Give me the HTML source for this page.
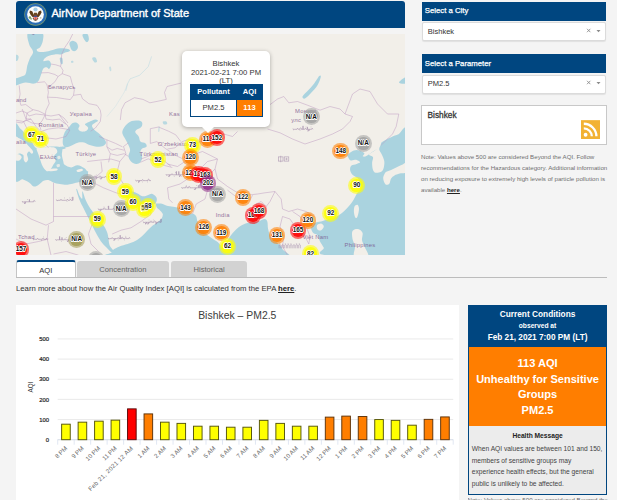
<!DOCTYPE html>
<html><head><meta charset="utf-8">
<style>
html,body{margin:0;padding:0;}
html{width:617px;height:500px;overflow:hidden;background:#f4f4f4;}
body{width:617px;height:500px;overflow:hidden;background:#f4f4f4;font-family:"Liberation Sans",sans-serif;position:relative;color:#222;}
.abs{position:absolute;}
#hdr{left:16px;top:1px;width:389px;height:27px;background:#004680;border-radius:3px 3px 0 0;}
#hdr .t{position:absolute;left:35.5px;top:5.9px;font-size:11.05px;line-height:12px;font-weight:normal;-webkit-text-stroke:0.38px #fff;color:#fff;white-space:nowrap;}
#map{left:16px;top:34px;width:389px;height:220.5px;background:#f2efe9;overflow:hidden;}
#map svg{position:absolute;left:0;top:0;}
.ph{background:#004680;color:#fff;font-size:7.75px;font-weight:normal;-webkit-text-stroke:0.25px #fff;line-height:9px;}
.sel{background:#fff;border:1px solid #dbdbdb;border-radius:2px;box-sizing:border-box;font-size:7.5px;line-height:9px;color:#333;box-shadow:0 0.5px 1px rgba(0,0,0,0.08);}
.mk{position:absolute;width:0;height:0;}
.mk i{position:absolute;left:-8.4px;top:-8.4px;width:16.8px;height:16.8px;border-radius:50%;opacity:.56;}
.mk b{position:absolute;left:-6.4px;top:-6.4px;width:12.8px;height:12.8px;border-radius:50%;opacity:.84;}
.mk span{position:absolute;left:-12px;top:-5.1px;width:24px;text-align:center;font-size:6.35px;line-height:9px;font-weight:bold;color:#111;
 text-shadow:-0.6px 0 #fff,0.6px 0 #fff,0 -0.6px #fff,0 0.6px #fff,-0.5px -0.5px #fff,0.5px 0.5px #fff,-0.5px 0.5px #fff,0.5px -0.5px #fff;}
.ml{position:absolute;font-size:5.9px;line-height:7px;color:#744a85;white-space:nowrap;opacity:.74;letter-spacing:0.22px}
.ml.ar{letter-spacing:0;font-size:5.8px}
#pop{left:166px;top:17px;width:88px;height:75.5px;background:#fff;border-radius:5px;box-shadow:0 1px 4px rgba(0,0,0,0.3);}
#pop .tx{position:absolute;left:0;width:88px;text-align:center;font-size:7.7px;line-height:8.5px;color:#333;top:9.2px;}
#tip{left:185.5px;top:92.5px;width:0;height:0;border-left:6.5px solid transparent;border-right:6.5px solid transparent;border-top:6.5px solid #fff;}
.tab{box-sizing:border-box;font-size:7.6px;line-height:9px;text-align:center;border-radius:3px 3px 0 0;}
</style></head><body>
<div id="hdr" class="abs"><div class="t">AirNow Department of State</div>
<svg class="abs" style="left:7.7px;top:1.9px" width="23" height="23" viewBox="-11.5 -11.5 23 23">
<circle r="11.2" fill="#7d9a6c"/><circle r="10.6" fill="#2a6db5"/><circle r="8.35" fill="#fdfdfb"/>
<circle cx="0" cy="-5" r="2.1" fill="#a5cde6"/>
<path d="M-5.6 -4 L-3.3 -3.2 L-1.6 0.2 L-1 3.2 L-3 2.4 L-4.9 0.2 L-6 -2 Z" fill="#5e3d18"/>
<path d="M5.6 -4 L3.3 -3.2 L1.6 0.2 L1 3.2 L3 2.4 L4.9 0.2 L6 -2 Z" fill="#5e3d18"/>
<path d="M-1.4 -1.8 L1.4 -1.8 L1.8 1.6 L-1.8 1.6 Z" fill="#6a4a25"/>
<path d="M-3 3.4 L3 3.4 L1.6 5.8 L0 6.6 L-1.6 5.8 Z" fill="#6d5a3e"/>
<rect x="-1.7" y="1.3" width="3.4" height="3.7" rx="0.8" fill="#e0524a"/>
<rect x="-1.7" y="1.3" width="3.4" height="1.1" fill="#2c4f9c"/>
<rect x="-0.9" y="2.4" width="0.45" height="2.5" fill="#fff" opacity=".8"/><rect x="0.45" y="2.4" width="0.45" height="2.5" fill="#fff" opacity=".8"/>
<circle cx="-5.6" cy="3" r="1.2" fill="#5f8f4a" opacity=".85"/><circle cx="-4.4" cy="4.4" r="0.8" fill="#5f8f4a" opacity=".8"/>
<circle cx="5.2" cy="3.4" r="0.8" fill="#8a8a80" opacity=".6"/>
</svg>
</div>
<div id="map" class="abs">
<svg width="389" height="221" viewBox="0 0 389 221">
<path d="M12.2 -1.3C14.3 -3.1 23.5 -2.6 25.9 -1.3C28.4 -0.0 27.2 4.1 26.9 6.5C26.6 8.9 25.3 11.5 24.3 13.0C23.3 14.5 21.0 14.6 20.7 15.4C20.5 16.2 21.3 17.4 22.7 17.8C24.1 18.2 27.0 18.1 29.2 17.8C31.3 17.6 33.2 16.8 35.7 16.2C38.1 15.6 41.1 14.5 43.8 14.3C46.5 14.1 50.2 14.6 51.9 15.1C53.5 15.5 54.3 16.4 53.8 17.0C53.3 17.6 50.1 18.2 48.6 18.8C47.2 19.4 46.7 20.2 45.1 20.4C43.4 20.7 41.0 20.2 38.9 20.4C36.8 20.7 34.1 21.2 32.4 21.9C30.7 22.5 29.7 23.4 28.8 24.3C28.0 25.2 26.8 26.8 27.6 27.2C28.3 27.6 32.0 26.1 33.2 26.7C34.5 27.3 35.0 29.4 35.0 30.8C35.0 32.1 34.0 34.4 33.2 34.8C32.5 35.3 31.5 33.2 30.5 33.2C29.5 33.2 28.1 33.6 27.2 34.8C26.3 36.1 25.9 38.5 25.1 40.5C24.3 42.5 23.5 45.5 22.4 47.0C21.2 48.5 20.3 49.3 18.2 49.6C16.0 49.9 12.2 48.5 9.7 48.6C7.2 48.7 4.9 49.8 3.2 50.2C1.6 50.7 0.8 51.3 0.0 51.5C-0.8 51.8 -1.1 52.6 -1.3 51.5C-1.5 50.5 -2.2 46.8 -1.3 45.4C-0.4 43.9 2.3 43.8 4.1 42.9C5.8 42.1 8.2 42.4 9.4 40.5C10.6 38.6 10.6 34.3 11.3 31.6C12.1 28.9 13.0 26.4 13.9 24.3C14.9 22.2 16.5 20.6 16.9 19.1C17.2 17.7 16.9 17.1 16.2 15.6C15.6 14.0 13.6 12.5 13.0 9.7C12.3 6.9 10.0 0.5 12.2 -1.3Z" fill="#aad3df" />
<path d="M53.5 8.9C53.9 7.9 55.5 6.8 56.7 6.8C57.9 6.8 59.9 7.8 60.8 8.9C61.6 10.1 62.2 12.4 61.9 13.8C61.6 15.1 60.2 16.6 59.2 17.0C58.2 17.4 56.7 16.9 55.9 16.2C55.1 15.5 54.7 14.2 54.3 13.0C53.9 11.8 53.1 9.9 53.5 8.9Z" fill="#aad3df" />
<path d="M66.5 0.8C66.9 -0.3 70.2 -0.7 71.3 0.0C72.4 0.7 72.9 3.5 72.9 4.9C72.9 6.2 72.0 7.8 71.3 8.1C70.6 8.4 69.7 7.7 68.9 6.5C68.1 5.3 66.0 1.9 66.5 0.8Z" fill="#aad3df" />
<path d="M76.2 24.3C76.3 23.5 78.6 23.0 79.4 23.5C80.2 24.0 81.2 26.7 81.0 27.6C80.9 28.4 79.4 28.9 78.6 28.4C77.8 27.8 76.0 25.1 76.2 24.3Z" fill="#aad3df" opacity=".8"/>
<path d="M43.8 24.3C43.9 23.3 45.7 23.2 46.2 24.0C46.7 24.8 46.9 28.2 46.7 29.2C46.5 30.2 45.5 30.8 45.1 30.0C44.6 29.2 43.6 25.3 43.8 24.3Z" fill="#aad3df" />
<path d="M-0.8 21.1C-0.3 20.3 2.0 21.1 2.4 21.9C2.9 22.7 2.5 25.1 1.9 25.9C1.4 26.7 -0.4 27.6 -0.8 26.7C-1.3 25.9 -1.4 21.9 -0.8 21.1Z" fill="#aad3df" opacity=".8"/>
<path d="M55.1 27.2C55.4 26.9 56.7 26.7 57.1 26.9C57.4 27.1 57.6 28.2 57.4 28.5C57.1 28.8 55.8 29.1 55.4 28.8C55.1 28.6 54.8 27.6 55.1 27.2Z" fill="#aad3df" opacity=".7"/>
<path d="M93.2 33.2C93.3 32.5 94.5 32.4 94.8 32.9C95.2 33.4 95.4 35.8 95.3 36.5C95.2 37.1 94.4 37.5 94.0 37.0C93.7 36.4 93.1 33.9 93.2 33.2Z" fill="#aad3df" opacity=".6"/>
<path d="M47.0 104.1C47.3 102.1 47.7 100.2 48.6 98.4C49.6 96.7 51.3 95.1 52.7 93.6C54.0 92.0 55.4 89.8 56.7 89.0C58.1 88.2 59.6 88.3 60.8 88.7C61.9 89.1 63.3 90.5 63.5 91.6C63.8 92.7 62.0 94.2 62.4 95.2C62.7 96.2 64.3 97.3 65.6 97.6C67.0 97.9 69.4 97.5 70.5 96.8C71.6 96.1 72.4 94.6 72.1 93.6C71.9 92.5 68.7 91.3 68.9 90.3C69.0 89.4 71.2 88.7 72.9 87.9C74.7 87.1 77.9 85.6 79.4 85.4C80.9 85.3 82.4 86.1 81.8 87.1C81.3 88.0 76.9 89.8 76.2 91.1C75.5 92.5 76.7 93.8 77.8 95.2C78.9 96.5 81.0 97.7 82.7 99.2C84.3 100.7 86.3 102.5 87.5 104.1C88.7 105.6 90.0 107.2 90.0 108.5C90.0 109.7 89.0 111.0 87.5 111.7C86.0 112.4 83.3 112.8 81.0 112.7C78.7 112.6 75.9 111.8 73.7 111.1C71.6 110.4 70.0 108.9 68.1 108.5C66.2 108.0 64.3 108.0 62.4 108.5C60.5 108.9 58.8 110.2 56.7 111.1C54.7 111.9 51.9 113.4 50.2 113.3C48.6 113.2 47.5 112.1 47.0 110.6C46.5 109.0 46.7 106.1 47.0 104.1Z" fill="#aad3df" />
<path d="M43.8 113.0C44.4 112.5 47.7 112.2 48.6 112.5C49.6 112.8 50.1 114.2 49.4 114.6C48.8 115.1 45.5 115.5 44.6 115.3C43.6 115.0 43.1 113.5 43.8 113.0Z" fill="#aad3df" />
<path d="M106.4 97.3C106.8 95.6 108.2 93.0 109.8 91.3C111.4 89.6 113.7 87.8 115.8 87.0C118.0 86.2 121.0 86.3 122.7 86.6C124.4 86.9 125.7 87.6 126.2 88.7C126.6 89.8 126.2 91.9 125.3 93.0C124.4 94.2 122.0 94.7 121.0 95.6C120.0 96.4 119.0 97.0 119.3 98.2C119.6 99.3 121.9 100.9 122.7 102.5C123.6 104.0 123.3 106.5 124.4 107.6C125.6 108.8 128.6 108.5 129.6 109.4C130.6 110.2 131.0 111.9 130.5 112.8C129.9 113.7 127.2 113.7 126.2 114.5C125.2 115.4 124.4 116.5 124.4 118.0C124.4 119.4 126.2 121.4 126.2 123.1C126.2 124.8 125.5 127.1 124.4 128.3C123.4 129.4 121.7 130.2 120.1 130.0C118.6 129.9 116.3 128.7 115.0 127.4C113.7 126.1 112.5 124.1 112.4 122.3C112.3 120.4 114.1 118.1 114.1 116.2C114.1 114.4 113.1 112.8 112.4 111.1C111.7 109.4 110.7 107.5 109.8 105.9C109.0 104.3 107.8 103.0 107.2 101.6C106.7 100.2 105.9 99.0 106.4 97.3Z" fill="#aad3df" />
<path d="M146.8 87.8C147.2 87.4 149.5 87.1 150.3 87.5C151.0 87.9 151.5 89.6 151.1 90.1C150.8 90.6 148.7 90.8 148.0 90.4C147.3 90.1 146.4 88.3 146.8 87.8Z" fill="#aad3df" opacity=".8"/>
<path d="M142.5 93.0C142.8 92.2 143.6 91.9 143.7 92.7C143.9 93.4 143.6 96.5 143.4 97.3C143.1 98.1 142.3 98.4 142.2 97.7C142.0 96.9 142.3 93.8 142.5 93.0Z" fill="#aad3df" opacity=".5"/>
<path d="M-1.3 92.7C-0.3 84.6 2.6 93.5 4.5 94.8C6.4 96.2 8.1 98.6 10.0 100.8C12.0 103.1 14.4 106.3 16.2 108.5C18.0 110.7 18.0 113.3 20.7 114.0C23.4 114.7 28.8 112.9 32.4 112.7C36.0 112.5 40.2 112.4 42.5 112.7C44.8 113.0 45.6 113.2 46.2 114.6C46.8 116.0 45.7 118.9 45.9 121.1C46.1 123.3 46.9 126.0 47.3 127.6C47.8 129.2 47.3 129.9 48.6 130.8C49.9 131.8 52.9 133.4 55.1 133.4C57.3 133.5 59.4 131.0 61.6 131.2C63.7 131.3 66.5 133.0 68.1 134.1C69.7 135.1 70.6 136.8 71.3 137.3C72.0 137.8 72.1 135.8 72.1 137.1C72.1 138.4 72.0 143.4 71.3 145.2C70.6 146.9 69.7 147.1 68.1 147.6C66.5 148.1 63.7 148.0 61.6 148.4C59.4 148.8 57.0 149.6 55.1 150.0C53.2 150.4 52.1 150.8 50.2 150.8C48.4 150.8 45.9 150.4 43.8 150.0C41.6 149.6 39.2 149.1 37.3 148.4C35.4 147.7 34.0 146.3 32.4 146.0C30.8 145.7 29.2 146.0 27.6 146.8C25.9 147.6 24.3 149.9 22.7 150.8C21.1 151.8 19.4 152.9 17.8 152.5C16.2 152.1 14.9 149.6 13.0 148.4C11.1 147.2 8.9 145.9 6.5 145.2C4.1 144.4 -0.0 152.6 -1.3 143.9C-2.6 135.1 -2.3 100.9 -1.3 92.7Z" fill="#aad3df" />
<path d="M-1.3 103.6C-0.5 100.8 1.7 103.6 3.2 104.2C4.8 104.9 6.3 106.0 8.1 107.5C9.9 109.0 12.3 111.7 13.8 113.3C15.3 115.0 16.7 116.5 17.0 117.5C17.4 118.6 16.6 119.8 15.9 119.8C15.2 119.8 13.8 117.5 13.0 117.5C12.2 117.6 11.2 119.0 11.0 120.3C10.9 121.6 12.3 123.8 12.2 125.2C12.0 126.5 10.8 128.3 10.0 128.4C9.3 128.5 8.2 127.2 7.8 126.0C7.3 124.8 8.0 122.2 7.3 121.1C6.5 120.0 4.7 119.5 3.2 119.5C1.8 119.5 -0.5 123.8 -1.3 121.1C-2.1 118.5 -2.1 106.4 -1.3 103.6Z" fill="#f2efe9" />
<path d="M-1.3 120.9C-0.5 120.0 2.1 120.1 3.2 120.5C4.4 120.9 5.7 122.3 5.7 123.3C5.7 124.3 4.4 126.1 3.2 126.5C2.1 126.9 -0.5 126.7 -1.3 125.7C-2.1 124.8 -2.1 121.7 -1.3 120.9Z" fill="#f2efe9" />
<path d="M20.7 114.0C21.5 112.8 24.8 113.5 26.7 113.3C28.7 113.2 30.4 112.9 32.4 113.0C34.4 113.1 37.4 113.0 38.9 113.8C40.4 114.6 41.5 116.5 41.3 117.9C41.2 119.2 38.4 120.4 38.1 121.9C37.8 123.4 39.8 125.3 39.7 126.8C39.6 128.3 38.1 129.5 37.3 130.8C36.5 132.2 35.8 133.8 34.8 134.9C33.9 136.0 32.7 137.3 31.6 137.3C30.5 137.3 29.3 136.0 28.4 134.9C27.4 133.8 26.6 132.3 25.9 130.8C25.3 129.3 24.9 127.7 24.3 126.0C23.7 124.2 23.0 122.3 22.4 120.3C21.8 118.3 20.0 115.1 20.7 114.0Z" fill="#f2efe9" />
<path d="M32.4 135.1C33.7 134.7 39.1 134.3 40.5 134.5C41.9 134.7 42.1 136.0 40.8 136.4C39.5 136.9 34.1 137.3 32.7 137.1C31.3 136.9 31.1 135.6 32.4 135.1Z" fill="#f2efe9" />
<path d="M60.8 136.1C61.4 135.6 64.6 134.7 65.6 134.8C66.6 134.9 67.4 135.9 66.8 136.4C66.2 137.0 62.9 138.1 61.9 138.0C60.9 138.0 60.2 136.6 60.8 136.1Z" fill="#f2efe9" />
<path d="M41.3 122.7C41.6 122.2 43.2 121.6 43.8 121.9C44.3 122.2 44.8 123.8 44.6 124.3C44.3 124.9 42.7 125.4 42.1 125.2C41.6 124.9 41.1 123.3 41.3 122.7Z" fill="#f2efe9" opacity=".8"/>
<path d="M40.5 130.8C40.9 130.3 42.9 129.7 43.4 130.0C44.0 130.3 44.1 131.9 43.8 132.5C43.4 133.0 41.9 133.5 41.3 133.3C40.8 133.0 40.2 131.4 40.5 130.8Z" fill="#f2efe9" opacity=".8"/>
<path d="M60.4 155.9C59.9 154.1 60.6 154.5 61.2 155.5C61.7 156.4 62.8 160.2 63.6 161.8C64.5 163.3 65.8 165.3 66.2 164.7C66.6 164.1 66.1 159.3 66.2 158.2C66.3 157.1 66.4 156.9 67.0 158.2C67.6 159.6 68.6 163.6 69.8 166.3C71.0 169.0 72.3 171.4 74.3 174.4C76.3 177.4 79.3 181.2 81.6 184.1C83.9 187.1 86.5 189.8 88.1 192.2C89.7 194.7 90.6 196.6 91.3 198.7C92.1 200.9 92.1 203.0 92.5 205.2C92.9 207.4 93.0 209.9 93.8 211.7C94.5 213.5 96.7 215.1 97.0 216.2C97.3 217.4 96.8 218.9 95.7 218.5C94.6 218.1 92.3 215.5 90.5 213.6C88.7 211.7 86.6 209.6 84.8 207.2C83.1 204.7 81.3 201.5 80.0 199.1C78.6 196.6 78.0 195.0 76.7 192.6C75.5 190.1 74.2 187.4 72.7 184.5C71.2 181.5 69.3 177.7 67.8 174.7C66.3 171.8 65.0 169.8 63.8 166.6C62.5 163.5 60.8 157.8 60.4 155.9Z" fill="#aad3df" />
<path d="M104.3 156.6C105.2 156.4 107.9 158.1 110.0 158.2C112.0 158.3 114.4 157.1 116.5 157.4C118.5 157.7 120.5 159.0 122.1 159.8C123.7 160.6 124.7 162.0 126.2 162.3C127.7 162.5 129.4 161.9 131.0 161.4C132.7 161.0 134.4 159.6 135.9 159.8C137.4 160.0 139.1 161.7 140.0 162.7C140.8 163.8 141.0 165.1 140.8 166.3C140.6 167.5 139.9 169.5 138.8 169.9C137.7 170.3 135.8 168.7 134.3 168.7C132.7 168.8 130.8 169.4 129.4 170.4C128.1 171.3 127.4 174.0 126.2 174.4C125.0 174.8 123.3 173.9 122.1 172.8C120.9 171.7 120.1 169.3 118.9 167.9C117.7 166.6 116.6 165.6 114.8 164.7C113.1 163.7 110.0 163.2 108.3 162.3C106.7 161.3 105.5 160.1 104.8 159.2C104.1 158.2 103.4 156.7 104.3 156.6Z" fill="#aad3df" />
<path d="M138.1 169.6C139.0 169.6 142.7 169.1 145.0 169.6C147.3 170.0 149.6 171.6 151.9 172.1C154.2 172.7 156.7 172.6 158.8 173.0C160.8 173.4 161.6 173.7 163.9 174.7C166.2 175.7 170.2 178.2 172.5 179.0C174.8 179.9 176.4 179.3 177.7 179.9C179.0 180.5 179.6 181.2 180.3 182.5C180.9 183.8 180.8 185.8 181.5 187.6C182.2 189.5 183.2 191.7 184.6 193.7C185.9 195.7 187.7 197.8 189.7 199.7C191.7 201.5 194.3 203.1 196.6 204.8C198.9 206.6 201.6 207.1 203.5 210.0C205.5 212.9 214.6 219.5 208.3 222.1C202.0 224.6 185.0 225.3 165.6 225.5C146.3 225.7 103.8 224.2 92.1 223.0C80.5 221.9 94.9 219.7 95.7 218.5C96.5 217.3 95.7 216.9 97.0 215.9C98.3 214.9 101.1 213.5 103.5 212.5C105.9 211.5 108.9 211.0 111.6 210.1C114.3 209.1 117.3 208.2 119.7 206.8C122.1 205.5 124.3 203.6 126.2 202.0C128.1 200.3 129.4 198.7 131.0 197.1C132.7 195.5 134.3 193.6 135.9 192.2C137.5 190.9 139.1 190.3 140.8 189.0C142.4 187.7 144.6 185.9 145.6 184.5C146.6 183.0 147.0 181.4 146.8 180.1C146.5 178.7 145.0 177.4 144.0 176.4C143.0 175.3 141.5 174.7 140.8 173.6C140.0 172.5 139.9 170.2 139.5 169.6C139.0 168.9 137.2 169.6 138.1 169.6Z" fill="#aad3df" />
<path d="M210.7 208.3C211.5 206.3 212.7 204.3 214.2 202.3C215.6 200.3 217.3 198.1 219.3 196.2C221.3 194.4 223.9 192.4 226.2 191.1C228.5 189.8 230.5 189.1 233.1 188.5C235.7 187.9 239.1 188.2 241.7 187.6C244.3 187.1 247.0 185.1 248.6 185.1C250.2 185.1 250.8 186.1 251.3 187.6C251.9 189.2 251.6 192.4 252.0 194.5C252.4 196.7 253.0 198.7 253.8 200.5C254.5 202.4 255.2 204.4 256.3 205.7C257.5 207.0 259.3 207.3 260.6 208.3C262.0 209.3 263.4 210.5 264.4 211.7C265.4 212.9 265.7 213.5 266.7 215.5C267.6 217.5 279.9 222.4 270.1 223.8C260.3 225.2 218.3 225.4 208.1 223.8C198.0 222.2 208.9 216.9 209.3 214.3C209.8 211.7 209.9 210.3 210.7 208.3Z" fill="#aad3df" />
<path d="M392.3 98.0C394.0 110.5 392.6 155.0 392.3 175.5C391.9 196.0 403.9 213.6 390.2 221.2C376.6 228.9 324.0 222.5 310.2 221.2C296.5 220.0 308.8 216.0 307.8 213.8C306.7 211.5 305.0 209.6 304.0 207.5C303.0 205.4 302.7 202.7 301.5 201.2C300.3 199.8 298.0 200.0 297.0 198.8C296.0 197.5 294.9 195.4 295.2 193.8C295.6 192.1 297.3 189.8 299.0 188.8C300.7 187.7 303.0 188.1 305.2 187.5C307.5 186.9 310.0 185.9 312.8 185.0C315.5 184.1 318.8 183.5 321.5 182.0C324.2 180.5 326.5 178.7 329.0 176.2C331.5 173.8 334.6 170.2 336.5 167.5C338.4 164.8 339.4 162.1 340.6 160.0C341.9 157.9 343.7 157.3 344.1 154.8C344.4 152.4 343.9 147.7 342.7 145.4C341.5 143.1 338.3 142.7 336.8 141.1C335.4 139.5 334.3 137.5 334.1 135.9C333.9 134.3 334.4 132.6 335.5 131.6C336.6 130.6 339.2 130.5 340.6 129.9C342.1 129.3 344.1 128.8 344.1 128.2C344.1 127.5 342.2 126.2 340.6 125.9C339.1 125.6 336.0 126.9 334.6 126.4C333.2 126.0 332.6 123.9 332.0 123.0C331.5 122.1 330.6 122.1 331.2 121.3C331.7 120.4 333.9 118.7 335.5 117.8C337.0 117.0 338.9 116.2 340.6 116.1C342.4 116.1 344.5 116.9 345.8 117.5C347.1 118.1 348.2 118.8 348.4 119.6C348.5 120.3 346.5 121.7 346.7 122.1C346.8 122.6 348.2 122.8 349.2 122.5C350.2 122.2 351.2 121.3 352.7 120.4C354.1 119.5 356.4 118.0 357.8 117.0C359.3 116.0 360.1 115.7 361.3 114.4C362.4 113.1 363.3 110.7 364.7 109.2C366.2 107.8 368.2 106.8 369.9 105.8C371.6 104.8 373.1 104.1 375.1 103.2C377.1 102.4 379.1 101.5 381.9 100.6C384.8 99.8 390.5 85.6 392.3 98.0Z" fill="#aad3df" />
<path d="M361.3 113.5C361.1 115.1 359.2 116.2 357.8 117.3C356.5 118.5 353.2 119.5 353.0 120.4C352.9 121.4 356.5 121.6 357.0 123.0C357.5 124.4 356.1 126.9 356.1 129.0C356.1 131.2 356.4 134.3 357.0 135.9C357.6 137.5 358.3 138.3 359.6 138.7C360.9 139.0 363.4 138.7 364.7 138.0C366.1 137.3 366.9 136.3 367.5 134.5C368.1 132.8 368.6 129.7 368.3 127.3C368.1 125.0 366.6 122.4 365.8 120.4C364.9 118.4 363.3 117.1 363.2 115.3C363.1 113.4 365.1 110.7 365.1 109.2C365.0 107.7 364.1 106.5 363.0 106.3C361.9 106.1 359.0 106.8 358.7 108.0C358.4 109.2 361.4 112.0 361.3 113.5Z" fill="#f2efe9" />
<path d="M367.3 143.1C367.7 141.6 368.6 139.2 369.9 138.0C371.2 136.8 373.3 136.7 375.1 135.9C376.8 135.2 378.5 134.3 380.2 133.5C381.9 132.7 383.4 132.0 385.4 131.1C387.4 130.2 391.1 127.1 392.3 128.2C393.4 129.3 393.7 135.7 392.3 137.6C390.8 139.5 386.0 138.9 383.7 139.5C381.4 140.2 379.9 140.6 378.5 141.4C377.1 142.3 375.9 143.1 375.1 144.5C374.2 145.9 374.2 148.7 373.3 149.7C372.5 150.7 370.8 151.1 369.9 150.7C369.0 150.3 368.3 148.5 367.8 147.3C367.4 146.0 367.0 144.7 367.3 143.1Z" fill="#f2efe9" />
<path d="M338.5 172.5C339.1 171.2 340.8 170.3 341.5 170.8C342.2 171.2 343.0 173.0 343.0 175.0C343.0 177.0 342.1 181.0 341.5 182.5C340.9 184.0 340.1 184.4 339.5 183.8C338.9 183.1 338.2 180.6 338.0 178.8C337.8 176.9 337.9 173.8 338.5 172.5Z" fill="#f2efe9" />
<path d="M301.0 191.2C301.6 190.2 304.1 189.3 305.2 189.5C306.4 189.7 307.8 191.4 307.8 192.5C307.8 193.6 306.3 195.8 305.2 196.2C304.2 196.8 302.2 196.3 301.5 195.5C300.8 194.7 300.4 192.2 301.0 191.2Z" fill="#f2efe9" />
<path d="M336.5 197.0C337.4 195.3 340.3 194.7 342.0 195.0C343.7 195.3 345.8 196.9 346.5 198.8C347.2 200.6 345.7 204.0 346.0 206.2C346.3 208.5 347.5 209.8 348.5 212.5C349.5 215.2 353.7 220.8 352.0 222.5C350.3 224.2 340.7 224.2 338.5 222.5C336.3 220.8 339.3 215.4 339.0 212.5C338.7 209.6 336.9 207.6 336.5 205.0C336.1 202.4 335.6 198.7 336.5 197.0Z" fill="#f2efe9" />
<path d="M286.5 62.5C286.9 61.2 289.6 59.1 291.5 57.0C293.4 54.9 295.8 52.5 297.8 50.0C299.7 47.5 302.1 43.2 303.2 42.0C304.4 40.8 305.0 41.5 304.8 43.0C304.5 44.5 303.1 48.6 301.5 51.2C299.9 53.9 297.3 56.5 295.2 58.8C293.2 61.0 290.5 63.9 289.0 64.5C287.5 65.1 286.1 63.8 286.5 62.5Z" fill="#aad3df" />
<polyline points="25.0,97.5 32.5,95.0 42.5,93.8 50.0,95.0 53.8,96.2" fill="none" stroke="#b995be" stroke-width="0.6" stroke-linejoin="round" opacity="0.78" />
<polyline points="15.0,85.0 20.0,92.5 25.0,97.5 30.0,103.8 40.0,105.0 50.0,102.5 53.8,96.2" fill="none" stroke="#b995be" stroke-width="0.6" stroke-linejoin="round" opacity="0.78" />
<polyline points="6.2,75.0 10.0,85.0 15.0,85.0" fill="none" stroke="#b995be" stroke-width="0.6" stroke-linejoin="round" opacity="0.78" />
<polyline points="0.0,86.2 7.5,87.5 15.0,85.0" fill="none" stroke="#b995be" stroke-width="0.6" stroke-linejoin="round" opacity="0.78" />
<polyline points="7.5,87.5 11.2,95.0 17.5,100.0 15.0,105.0" fill="none" stroke="#b995be" stroke-width="0.6" stroke-linejoin="round" opacity="0.78" />
<polyline points="30.0,103.8 28.8,110.0 32.5,113.8" fill="none" stroke="#b995be" stroke-width="0.6" stroke-linejoin="round" opacity="0.78" />
<polyline points="37.5,148.8 37.5,182.5 75.0,182.5" fill="none" stroke="#b995be" stroke-width="0.6" stroke-linejoin="round" opacity="0.78" />
<polyline points="0.0,175.0 15.0,185.0 30.0,191.2 37.5,187.5 37.5,182.5" fill="none" stroke="#b995be" stroke-width="0.6" stroke-linejoin="round" opacity="0.78" />
<polyline points="32.5,191.2 31.2,205.0 35.0,221.2" fill="none" stroke="#b995be" stroke-width="0.6" stroke-linejoin="round" opacity="0.78" />
<polyline points="71.2,152.5 77.5,148.8 87.5,153.8 100.0,158.8 105.0,160.0" fill="none" stroke="#b995be" stroke-width="0.6" stroke-linejoin="round" opacity="0.78" />
<polyline points="96.2,200.0 105.0,196.2 115.0,193.8 125.0,187.5 135.0,180.0 133.8,175.0" fill="none" stroke="#b995be" stroke-width="0.6" stroke-linejoin="round" opacity="0.78" />
<polyline points="71.2,127.5 82.5,126.2 95.0,125.0 103.8,127.5 101.2,137.5 105.0,146.2 107.5,150.0" fill="none" stroke="#b995be" stroke-width="0.6" stroke-linejoin="round" opacity="0.78" />
<polyline points="125.0,125.0 135.0,121.2 147.5,126.2 155.0,132.5" fill="none" stroke="#b995be" stroke-width="0.6" stroke-linejoin="round" opacity="0.78" />
<polyline points="85.0,127.5 86.2,137.5 78.8,143.8 75.0,147.5 71.2,152.5" fill="none" stroke="#b995be" stroke-width="0.6" stroke-linejoin="round" opacity="0.78" />
<polyline points="103.8,127.5 110.0,120.0 107.5,112.5 112.5,108.8" fill="none" stroke="#b995be" stroke-width="0.6" stroke-linejoin="round" opacity="0.78" />
<polyline points="0.0,205.0 10.0,210.0 22.5,207.5 32.5,205.0" fill="none" stroke="#b995be" stroke-width="0.6" stroke-linejoin="round" opacity="0.78" />
<polyline points="75.0,182.5 76.2,190.0 72.5,200.0 75.0,210.0 82.5,217.5" fill="none" stroke="#b995be" stroke-width="0.6" stroke-linejoin="round" opacity="0.78" />
<polyline points="37.5,220.0 50.0,217.5 62.5,221.2" fill="none" stroke="#b995be" stroke-width="0.6" stroke-linejoin="round" opacity="0.78" />
<polyline points="134.3,94.7 134.3,109.4 140.8,107.6 149.4,114.5 159.7,121.4 166.6,124.8" fill="none" stroke="#b995be" stroke-width="0.6" stroke-linejoin="round" opacity="0.78" />
<polyline points="134.3,94.7 142.5,93.0 152.8,97.3 159.7,100.8 164.9,107.6" fill="none" stroke="#b995be" stroke-width="0.6" stroke-linejoin="round" opacity="0.78" />
<polyline points="124.4,128.3 132.2,124.8 140.8,128.3 149.4,131.7 156.3,133.5" fill="none" stroke="#b995be" stroke-width="0.6" stroke-linejoin="round" opacity="0.78" />
<polyline points="83.1,102.5 90.9,105.9 99.5,109.4 106.4,112.8" fill="none" stroke="#b995be" stroke-width="0.6" stroke-linejoin="round" opacity="0.78" />
<polyline points="90.9,112.8 96.0,116.2 101.2,114.5 108.1,116.2" fill="none" stroke="#b995be" stroke-width="0.6" stroke-linejoin="round" opacity="0.78" />
<polyline points="94.3,119.7 101.2,121.4 108.1,119.7 112.4,122.3" fill="none" stroke="#b995be" stroke-width="0.6" stroke-linejoin="round" opacity="0.78" />
<polyline points="90.9,105.9 90.9,112.8 94.3,119.7 92.6,128.3" fill="none" stroke="#b995be" stroke-width="0.6" stroke-linejoin="round" opacity="0.78" />
<polyline points="191.5,156.2 189.0,165.0 180.2,170.0 176.5,180.0" fill="none" stroke="#b995be" stroke-width="0.6" stroke-linejoin="round" opacity="0.78" />
<polyline points="151.5,153.8 164.0,150.0 171.5,145.0 179.0,137.5 186.5,132.5 191.5,127.5 201.5,125.0" fill="none" stroke="#b995be" stroke-width="0.6" stroke-linejoin="round" opacity="0.78" />
<polyline points="201.5,125.0 199.0,135.0 201.5,145.0 211.5,152.5 221.5,158.8 231.5,161.2 241.5,160.0 249.0,158.8 259.0,157.5" fill="none" stroke="#b995be" stroke-width="0.6" stroke-linejoin="round" opacity="0.78" />
<polyline points="211.5,156.2 221.5,163.8 234.0,166.2 236.5,161.2" fill="none" stroke="#b995be" stroke-width="0.6" stroke-linejoin="round" opacity="0.78" />
<polyline points="240.2,170.0 245.2,167.5 250.2,172.5 247.8,182.5 242.8,185.0 239.0,177.5 240.2,170.0" fill="none" stroke="#b995be" stroke-width="0.6" stroke-linejoin="round" opacity="0.78" />
<polyline points="250.2,172.5 254.0,167.5 259.0,157.5 265.2,165.0 266.5,175.0 272.8,177.5" fill="none" stroke="#b995be" stroke-width="0.6" stroke-linejoin="round" opacity="0.78" />
<polyline points="266.5,182.5 264.0,192.5 267.8,202.5 266.5,212.5 271.5,221.2" fill="none" stroke="#b995be" stroke-width="0.6" stroke-linejoin="round" opacity="0.78" />
<polyline points="276.5,177.5 284.0,182.5 290.2,192.5 294.0,202.5 292.8,210.0" fill="none" stroke="#b995be" stroke-width="0.6" stroke-linejoin="round" opacity="0.78" />
<polyline points="272.8,177.5 281.5,175.0 290.2,177.5 297.8,182.5" fill="none" stroke="#b995be" stroke-width="0.6" stroke-linejoin="round" opacity="0.78" />
<polyline points="266.5,182.5 274.0,185.0 279.0,192.5 286.5,197.5 292.8,210.0" fill="none" stroke="#b995be" stroke-width="0.6" stroke-linejoin="round" opacity="0.78" />
<polyline points="179.0,120.0 186.5,117.5 194.0,121.2 201.5,125.0" fill="none" stroke="#b995be" stroke-width="0.6" stroke-linejoin="round" opacity="0.78" />
<polyline points="151.5,130.0 161.5,132.5 169.0,127.5 179.0,120.0 176.5,112.5 184.0,107.5 194.0,110.0 207.8,100.0 216.5,102.5 221.5,97.5" fill="none" stroke="#b995be" stroke-width="0.6" stroke-linejoin="round" opacity="0.78" />
<polyline points="151.5,115.0 159.0,113.8 166.5,107.5 174.0,105.0 184.0,107.5" fill="none" stroke="#b995be" stroke-width="0.6" stroke-linejoin="round" opacity="0.78" />
<polyline points="151.5,153.8 152.8,165.0 156.5,168.8" fill="none" stroke="#b995be" stroke-width="0.6" stroke-linejoin="round" opacity="0.78" />
<polyline points="191.5,156.2 186.5,150.0 191.5,142.5 199.0,135.0" fill="none" stroke="#b995be" stroke-width="0.6" stroke-linejoin="round" opacity="0.78" />
<polyline points="251.5,72.5 261.5,65.0 267.8,62.5 272.8,68.8 281.5,67.5 291.5,71.2 304.0,76.2 314.0,72.5 324.0,75.0 329.0,80.0 336.5,82.5 334.0,87.5" fill="none" stroke="#b995be" stroke-width="0.6" stroke-linejoin="round" opacity="0.78" />
<polyline points="251.5,95.0 264.0,98.8 276.5,105.0 289.0,110.0 304.0,105.0 316.5,100.0 326.5,95.0 334.0,87.5" fill="none" stroke="#b995be" stroke-width="0.6" stroke-linejoin="round" opacity="0.78" />
<polyline points="329.0,80.0 336.5,60.0 344.0,55.0 354.0,57.5 361.5,70.0 371.5,80.0 382.8,80.0 380.2,92.5 376.5,100.0 371.5,105.0 365.2,111.2" fill="none" stroke="#b995be" stroke-width="0.6" stroke-linejoin="round" opacity="0.78" />
<polyline points="239.0,75.0 246.5,67.5 251.5,72.5" fill="none" stroke="#b995be" stroke-width="0.6" stroke-linejoin="round" opacity="0.78" />
<polyline points="229.0,82.5 239.0,75.0" fill="none" stroke="#b995be" stroke-width="0.6" stroke-linejoin="round" opacity="0.78" />
<polyline points="104.3,86.1 105.5,75.7 109.0,68.8 118.4,63.7 127.0,65.4 133.9,68.8 142.5,67.1 150.3,65.4 148.5,58.5 151.1,52.5 158.0,50.8 164.9,49.1" fill="none" stroke="#b995be" stroke-width="0.6" stroke-linejoin="round" opacity="0.78" />
<polyline points="109.8,56.8 111.5,49.9 114.1,44.8 123.6,41.3 132.2,32.7 135.6,22.4" fill="none" stroke="#aad3df" stroke-width="0.6" opacity="0.7"/>
<polyline points="90.9,82.6 99.5,72.3 108.1,58.5 111.5,49.9" fill="none" stroke="#aad3df" stroke-width="0.5" opacity="0.5"/>
<path d="M383.0 48.5C383.0 47.5 388.4 43.3 389.5 43.5C390.6 43.7 390.6 48.7 389.5 49.5C388.4 50.3 383.0 49.5 383.0 48.5Z" fill="#aad3df" />
<polyline points="57.1,-0.8 53.5,6.5 48.6,13.8 45.7,20.3 45.1,29.2 44.6,32.4" fill="none" stroke="#b995be" stroke-width="0.6" stroke-linejoin="round" opacity="0.78" />
<polyline points="34.8,30.0 39.7,30.8 44.6,32.4 47.0,36.5 46.2,39.7" fill="none" stroke="#b995be" stroke-width="0.6" stroke-linejoin="round" opacity="0.78" />
<polyline points="25.1,38.9 32.4,38.6 38.9,40.5 42.1,42.5 46.2,39.7" fill="none" stroke="#b995be" stroke-width="0.6" stroke-linejoin="round" opacity="0.78" />
<polyline points="42.1,42.5 38.9,47.8 34.0,51.9 31.6,53.5" fill="none" stroke="#b995be" stroke-width="0.6" stroke-linejoin="round" opacity="0.78" />
<polyline points="46.2,39.7 54.3,42.5 55.9,48.6 58.3,55.9 57.5,61.3" fill="none" stroke="#b995be" stroke-width="0.6" stroke-linejoin="round" opacity="0.78" />
<polyline points="31.6,63.2 40.5,63.5 48.6,64.8 54.3,65.6 57.5,61.3 64.8,60.3 66.5,64.8 72.9,69.7 81.0,71.3 84.3,76.2 85.1,81.0 84.3,87.5 79.4,94.0 74.6,97.2" fill="none" stroke="#b995be" stroke-width="0.6" stroke-linejoin="round" opacity="0.78" />
<polyline points="31.6,53.5 32.4,58.3 31.6,63.2 33.2,69.7 30.0,76.2 29.2,81.0 30.0,85.1" fill="none" stroke="#b995be" stroke-width="0.6" stroke-linejoin="round" opacity="0.78" />
<polyline points="21.1,48.6 28.4,47.8 30.8,50.2 31.6,53.5" fill="none" stroke="#b995be" stroke-width="0.6" stroke-linejoin="round" opacity="0.78" />
<polyline points="3.2,51.5 4.1,60.0 3.2,64.8 4.9,71.3 9.7,70.5 16.2,75.4 22.7,77.0 29.2,80.2" fill="none" stroke="#b995be" stroke-width="0.6" stroke-linejoin="round" opacity="0.78" />
<polyline points="30.0,85.1 36.5,85.9 43.8,85.1 47.0,88.3 51.1,90.8 53.5,95.6" fill="none" stroke="#b995be" stroke-width="0.6" stroke-linejoin="round" opacity="0.78" />
<polyline points="0.0,79.0 6.0,77.0 11.0,79.0 17.0,76.0" fill="none" stroke="#b995be" stroke-width="0.6" stroke-linejoin="round" opacity="0.78" />
<polyline points="11.0,79.0 13.0,82.0 20.0,80.0 29.0,81.0" fill="none" stroke="#b995be" stroke-width="0.6" stroke-linejoin="round" opacity="0.78" />
<polyline points="29.0,81.0 26.0,87.0 23.0,90.0" fill="none" stroke="#b995be" stroke-width="0.6" stroke-linejoin="round" opacity="0.78" />
<polyline points="11.0,79.0 10.0,86.0 6.0,89.0 0.0,88.0" fill="none" stroke="#b995be" stroke-width="0.6" stroke-linejoin="round" opacity="0.78" />
<polyline points="10.0,86.0 16.0,89.0 23.0,90.0 25.0,96.0" fill="none" stroke="#b995be" stroke-width="0.6" stroke-linejoin="round" opacity="0.78" />
<polyline points="29.0,81.0 35.0,82.0 43.0,80.5 47.0,86.0 50.0,90.0" fill="none" stroke="#b995be" stroke-width="0.6" stroke-linejoin="round" opacity="0.78" />
<polyline points="43.0,80.5 48.0,84.0 52.0,89.0" fill="none" stroke="#b995be" stroke-width="0.6" stroke-linejoin="round" opacity="0.78" />
</svg>
<svg width="389" height="221" viewBox="0 0 389 221" opacity="0.62"><rect x="262.4" y="122.9" width="4.6" height="4.2" fill="none" stroke="#7d5a8c" stroke-width="0.55"/><rect x="268.2" y="122.9" width="4.6" height="4.2" fill="none" stroke="#7d5a8c" stroke-width="0.55"/><path d="M264.7 121.8v6.4" stroke="#7d5a8c" stroke-width="0.55" fill="none"/><path d="M269.2 125.0h2.6M270.5 123.7v2.6" stroke="#7d5a8c" stroke-width="0.5" fill="none"/><path d="M263.1 214.3v-3.2q1.1 -1 1.7 0v3.2M263.1 209.9h1.2M265.9 214.3v-3.2q1.1 -1 1.7 0v3.2M268.7 214.3v-3.2q1.1 -1 1.7 0v3.2M268.8 209.9h1.2M271.4 214.3v-3.2q1.1 -1 1.7 0v3.2M271.5 209.9h1.2M274.2 214.3v-3.2q1.1 -1 1.7 0v3.2M274.3 209.9h1.2M277.1 214.3v-3.2q1.1 -1 1.7 0v3.2M279.9 214.3v-3.2q1.1 -1 1.7 0v3.2M279.9 209.9h1.2M282.7 214.3v-3.2q1.1 -1 1.7 0v3.2M282.8 209.9h1.2" stroke="#7d5a8c" stroke-width="0.5" fill="none"/><circle cx="11.3" cy="165.4" r="0.38" fill="#7d5a8c"/><circle cx="9.5" cy="169.2" r="0.38" fill="#7d5a8c"/><path d="M18.8 167.8a0.8 0.8 0 1 0 -1.2 0h-2.4h-1.8v-2.4v2.4h-1.4h-2.4q-0.2 2.4 -1.6 1.6q1 -0.4 1.6 -1.6h-1.8q-1.2 1.6 -1.6 -0.8" stroke="#7d5a8c" stroke-width="0.62" fill="none" stroke-linejoin="round"/><circle cx="55.6" cy="163.9" r="0.38" fill="#7d5a8c"/><circle cx="53.8" cy="163.9" r="0.38" fill="#7d5a8c"/><circle cx="51.0" cy="167.7" r="0.38" fill="#7d5a8c"/><circle cx="48.6" cy="163.9" r="0.38" fill="#7d5a8c"/><path d="M56.8 166.3v-3.4v3.4h-1.8q-0.6 -2.2 -1.2 0h-1.8q-0.6 -2.2 -1.2 0h-1.4h-1.4h-2.4q-0.6 -2.2 -1.2 0h-2.4q-1.2 1.6 -1.6 -0.8" stroke="#7d5a8c" stroke-width="0.62" fill="none" stroke-linejoin="round"/><circle cx="131.4" cy="147.9" r="0.38" fill="#7d5a8c"/><circle cx="126.6" cy="147.9" r="0.38" fill="#7d5a8c"/><path d="M135.0 146.6h-1.8a0.8 0.8 0 1 0 -1.2 0h-2.4h-2.4q-0.6 -2.2 -1.2 0h-2.4q-0.2 2.4 -1.6 1.6q1 -0.4 1.6 -1.6h-2.4q-1.2 1.6 -1.6 -0.8" stroke="#7d5a8c" stroke-width="0.62" fill="none" stroke-linejoin="round"/><circle cx="109.8" cy="202.2" r="0.38" fill="#7d5a8c"/><circle cx="108.4" cy="205.9" r="0.38" fill="#7d5a8c"/><circle cx="102.2" cy="205.9" r="0.38" fill="#7d5a8c"/><path d="M114.0 204.6q-0.6 -2.2 -1.2 0h-2.4q-0.6 -2.2 -1.2 0h-2.4a0.8 0.8 0 1 0 -1.2 0h-1.4v-3.4v3.4h-1.4q-0.6 -2.2 -1.2 0h-2.4q-0.2 2.4 -1.6 1.6q1 -0.4 1.6 -1.6h-2.4q-0.6 -2.2 -1.2 0h-1.8q-1.2 1.6 -1.6 -0.8" stroke="#7d5a8c" stroke-width="0.62" fill="none" stroke-linejoin="round"/><circle cx="103.0" cy="172.9" r="0.38" fill="#7d5a8c"/><circle cx="91.8" cy="172.9" r="0.38" fill="#7d5a8c"/><circle cx="88.0" cy="172.9" r="0.38" fill="#7d5a8c"/><path d="M104.2 175.3v-2.4v2.4h-1.8v-3.4v3.4h-1.8q-0.6 -2.2 -1.2 0h-1.4q-0.6 -2.2 -1.2 0h-1.8h-2.4v-3.4v3.4h-1.4h-2.4a0.8 0.8 0 1 0 -1.2 0h-2.4q-0.2 2.4 -1.6 1.6q1 -0.4 1.6 -1.6h-1.4q-1.2 1.6 -1.6 -0.8" stroke="#7d5a8c" stroke-width="0.62" fill="none" stroke-linejoin="round"/><circle cx="137.2" cy="185.9" r="0.38" fill="#7d5a8c"/><circle cx="133.0" cy="185.9" r="0.38" fill="#7d5a8c"/><path d="M145.0 188.3v-3.4v3.4h-1.4q-0.6 -2.2 -1.2 0h-1.4q-0.2 2.4 -1.6 1.6q1 -0.4 1.6 -1.6h-1.8a0.8 0.8 0 1 0 -1.2 0h-2.4a0.8 0.8 0 1 0 -1.2 0h-1.4q-0.2 2.4 -1.6 1.6q1 -0.4 1.6 -1.6h-2.4q-0.2 2.4 -1.6 1.6q1 -0.4 1.6 -1.6h-1.8q-1.2 1.6 -1.6 -0.8" stroke="#7d5a8c" stroke-width="0.62" fill="none" stroke-linejoin="round"/><circle cx="167.6" cy="142.2" r="0.38" fill="#7d5a8c"/><circle cx="165.8" cy="142.2" r="0.38" fill="#7d5a8c"/><circle cx="159.6" cy="138.4" r="0.38" fill="#7d5a8c"/><circle cx="158.2" cy="142.2" r="0.38" fill="#7d5a8c"/><path d="M174.0 140.8v-2.4v2.4h-1.8a0.8 0.8 0 1 0 -1.2 0h-1.4q-0.6 -2.2 -1.2 0h-1.4v-3.4v3.4h-2.4q-0.2 2.4 -1.6 1.6q1 -0.4 1.6 -1.6h-1.8v-3.4v3.4h-2.4v-3.4v3.4h-2.4h-1.4q-0.6 -2.2 -1.2 0h-1.4q-0.2 2.4 -1.6 1.6q1 -0.4 1.6 -1.6h-2.4q-1.2 1.6 -1.6 -0.8" stroke="#7d5a8c" stroke-width="0.62" fill="none" stroke-linejoin="round"/><circle cx="183.0" cy="151.4" r="0.38" fill="#7d5a8c"/><circle cx="180.6" cy="151.4" r="0.38" fill="#7d5a8c"/><circle cx="178.2" cy="155.2" r="0.38" fill="#7d5a8c"/><circle cx="170.2" cy="151.4" r="0.38" fill="#7d5a8c"/><path d="M185.2 153.8h-1.4v-3.4v3.4h-1.4v-2.4v2.4h-2.4q-0.2 2.4 -1.6 1.6q1 -0.4 1.6 -1.6h-2.4h-2.4h-1.4a0.8 0.8 0 1 0 -1.2 0h-1.8a0.8 0.8 0 1 0 -1.2 0h-2.4q-1.2 1.6 -1.6 -0.8" stroke="#7d5a8c" stroke-width="0.62" fill="none" stroke-linejoin="round"/><circle cx="84.0" cy="144.7" r="0.38" fill="#7d5a8c"/><circle cx="80.2" cy="140.9" r="0.38" fill="#7d5a8c"/><path d="M90.0 143.3q-0.6 -2.2 -1.2 0h-1.4h-1.4q-0.2 2.4 -1.6 1.6q1 -0.4 1.6 -1.6h-1.4a0.8 0.8 0 1 0 -1.2 0h-2.4q-0.2 2.4 -1.6 1.6q1 -0.4 1.6 -1.6h-1.4a0.8 0.8 0 1 0 -1.2 0h-2.4q-1.2 1.6 -1.6 -0.8" stroke="#7d5a8c" stroke-width="0.62" fill="none" stroke-linejoin="round"/><circle cx="27.7" cy="202.9" r="0.38" fill="#7d5a8c"/><circle cx="25.3" cy="206.7" r="0.38" fill="#7d5a8c"/><path d="M31.2 205.3q-0.6 -2.2 -1.2 0h-2.4q-0.6 -2.2 -1.2 0h-1.8h-2.4q-0.6 -2.2 -1.2 0h-2.4q-1.2 1.6 -1.6 -0.8" stroke="#7d5a8c" stroke-width="0.62" fill="none" stroke-linejoin="round"/><circle cx="51.6" cy="207.2" r="0.38" fill="#7d5a8c"/><circle cx="50.2" cy="203.4" r="0.38" fill="#7d5a8c"/><circle cx="45.4" cy="207.2" r="0.38" fill="#7d5a8c"/><path d="M52.8 205.8q-0.2 2.4 -1.6 1.6q1 -0.4 1.6 -1.6h-1.8h-1.4q-0.6 -2.2 -1.2 0h-2.4v-2.4v2.4h-2.4v-3.4v3.4h-2.4q-1.2 1.6 -1.6 -0.8" stroke="#7d5a8c" stroke-width="0.62" fill="none" stroke-linejoin="round"/><circle cx="295.0" cy="92.9" r="0.38" fill="#7d5a8c"/><circle cx="293.2" cy="96.7" r="0.38" fill="#7d5a8c"/><circle cx="290.0" cy="92.9" r="0.38" fill="#7d5a8c"/><circle cx="284.0" cy="96.7" r="0.38" fill="#7d5a8c"/><path d="M296.8 95.3q-0.6 -2.2 -1.2 0h-2.4q-0.2 2.4 -1.6 1.6q1 -0.4 1.6 -1.6h-1.8v-2.4v2.4h-1.4q-0.6 -2.2 -1.2 0h-1.8v-3.4v3.4h-1.8a0.8 0.8 0 1 0 -1.2 0h-1.8q-0.6 -2.2 -1.2 0h-2.4q-1.2 1.6 -1.6 -0.8" stroke="#7d5a8c" stroke-width="0.62" fill="none" stroke-linejoin="round"/></svg>
<span class="ml" style="left:1px;top:-5.3px">Sverige</span>
<span class="ml" style="left:32px;top:49.75px">Беларусь</span>
<span class="ml" style="left:53.75px;top:76.5px">Україна</span>
<span class="ml" style="left:22.5px;top:87.75px">România</span>
<span class="ml" style="left:0px;top:62.75px">and</span>
<span class="ml" style="left:0px;top:105.25px">alia</span>
<span class="ml" style="left:23.75px;top:120.25px">Ελλάς</span>
<span class="ml" style="left:59.5px;top:116.5px">Türkiye</span>
<span class="ml" style="left:141.75px;top:106.5px">O'zbekiston</span>
<span class="ml" style="left:123.6px;top:117px">Türkmenistan</span>
<span class="ml" style="left:199.75px;top:177.75px">India</span>
<span class="ml" style="left:286.5px;top:199.5px">Việt Nam</span>
<span class="ml" style="left:328.5px;top:207.75px">Philippines</span>
<span class="ml" style="left:2px;top:200.25px">Tchad</span>
<span class="ml" style="left:279px;top:73.5px">Монгол</span>
<span class="ml" style="left:275.25px;top:82.75px">улс</span>
<span class="ml" style="left:153px;top:77px">Kas</span>
<div class="mk" style="left:80.00px;top:225.60px;"><i style="background:#a2a2a2"></i><b style="background:#a2a2a2"></b><span></span></div>
<div class="mk" style="left:15.50px;top:100.80px;"><i style="background:#ffff00"></i><b style="background:#ffff00"></b><span>67</span></div>
<div class="mk" style="left:24.50px;top:105.30px;"><i style="background:#ffff00"></i><b style="background:#ffff00"></b><span>71</span></div>
<div class="mk" style="left:142.00px;top:125.80px;"><i style="background:#ffff00"></i><b style="background:#ffff00"></b><span>52</span></div>
<div class="mk" style="left:71.25px;top:148.70px;"><i style="background:#a2a2a2"></i><b style="background:#a2a2a2"></b><span>N/A</span></div>
<div class="mk" style="left:98.00px;top:142.80px;"><i style="background:#ffff00"></i><b style="background:#ffff00"></b><span>58</span></div>
<div class="mk" style="left:109.25px;top:157.80px;"><i style="background:#ffff00"></i><b style="background:#ffff00"></b><span>59</span></div>
<div class="mk" style="left:105.10px;top:174.70px;"><i style="background:#a2a2a2"></i><b style="background:#a2a2a2"></b><span>N/A</span></div>
<div class="mk" style="left:117.00px;top:168.30px;"><i style="background:#ffff00"></i><b style="background:#ffff00"></b><span>60</span></div>
<div class="mk" style="left:128.75px;top:175.30px;"><i style="background:#ffff00"></i><b style="background:#ffff00"></b><span>55</span></div>
<div class="mk" style="left:132.00px;top:172.05px;"><i style="background:#ffff00"></i><b style="background:#ffff00"></b><span>88</span></div>
<div class="mk" style="left:81.25px;top:185.30px;"><i style="background:#ffff00"></i><b style="background:#ffff00"></b><span>59</span></div>
<div class="mk" style="left:60.60px;top:205.20px;"><i style="background:#a39c55"></i><b style="background:#a39c55"></b><span>N/A</span></div>
<div class="mk" style="left:5.00px;top:215.30px;"><i style="background:#ff0000"></i><b style="background:#ff0000"></b><span>157</span></div>
<div class="mk" style="left:176.50px;top:111.30px;"><i style="background:#ffff00"></i><b style="background:#ffff00"></b><span>73</span></div>
<div class="mk" style="left:191.60px;top:105.40px;"><i style="background:#ff7e00"></i><b style="background:#ff7e00"></b><span>113</span></div>
<div class="mk" style="left:200.90px;top:103.70px;"><i style="background:#ff0000"></i><b style="background:#ff0000"></b><span>152</span></div>
<div class="mk" style="left:174.50px;top:123.30px;"><i style="background:#ff7e00"></i><b style="background:#ff7e00"></b><span>120</span></div>
<div class="mk" style="left:174.50px;top:138.80px;"><i style="background:#ff7e00"></i><b style="background:#ff7e00"></b><span>121</span></div>
<div class="mk" style="left:182.75px;top:140.30px;"><i style="background:#ff0000"></i><b style="background:#ff0000"></b><span>133</span></div>
<div class="mk" style="left:189.00px;top:141.30px;"><i style="background:#ff0000"></i><b style="background:#ff0000"></b><span>163</span></div>
<div class="mk" style="left:192.00px;top:149.55px;"><i style="background:#8f2f8a"></i><b style="background:#8f2f8a"></b><span>202</span></div>
<div class="mk" style="left:201.50px;top:160.30px;"><i style="background:#a2a2a2"></i><b style="background:#a2a2a2"></b><span>N/A</span></div>
<div class="mk" style="left:169.50px;top:173.80px;"><i style="background:#ff7e00"></i><b style="background:#ff7e00"></b><span>143</span></div>
<div class="mk" style="left:227.00px;top:163.30px;"><i style="background:#ff7e00"></i><b style="background:#ff7e00"></b><span>122</span></div>
<div class="mk" style="left:237.00px;top:181.50px;"><i style="background:#ff0000"></i><b style="background:#ff0000"></b><span>167</span></div>
<div class="mk" style="left:243.00px;top:177.00px;"><i style="background:#ff0000"></i><b style="background:#ff0000"></b><span>168</span></div>
<div class="mk" style="left:187.75px;top:193.30px;"><i style="background:#ff7e00"></i><b style="background:#ff7e00"></b><span>126</span></div>
<div class="mk" style="left:205.25px;top:198.80px;"><i style="background:#ff7e00"></i><b style="background:#ff7e00"></b><span>119</span></div>
<div class="mk" style="left:211.50px;top:212.55px;"><i style="background:#ffff00"></i><b style="background:#ffff00"></b><span>62</span></div>
<div class="mk" style="left:261.00px;top:201.30px;"><i style="background:#ff7e00"></i><b style="background:#ff7e00"></b><span>131</span></div>
<div class="mk" style="left:282.00px;top:196.55px;"><i style="background:#ff0000"></i><b style="background:#ff0000"></b><span>165</span></div>
<div class="mk" style="left:291.90px;top:186.10px;"><i style="background:#ff7e00"></i><b style="background:#ff7e00"></b><span>120</span></div>
<div class="mk" style="left:294.50px;top:219.80px;"><i style="background:#ffff00"></i><b style="background:#ffff00"></b><span>82</span></div>
<div class="mk" style="left:347.25px;top:109.55px;"><i style="background:#a2a2a2"></i><b style="background:#a2a2a2"></b><span>N/A</span></div>
<div class="mk" style="left:324.75px;top:117.05px;"><i style="background:#ff7e00"></i><b style="background:#ff7e00"></b><span>148</span></div>
<div class="mk" style="left:340.75px;top:151.30px;"><i style="background:#ffff00"></i><b style="background:#ffff00"></b><span>90</span></div>
<div class="mk" style="left:314.75px;top:179.55px;"><i style="background:#ffff00"></i><b style="background:#ffff00"></b><span>92</span></div>
<div class="mk" style="left:295.25px;top:82.80px;"><i style="background:#a2a2a2"></i><b style="background:#a2a2a2"></b><span>N/A</span></div>
<div class="mk" style="left:128.75px;top:174.50px;opacity:.6"><span>55</span></div>
<div id="pop" class="abs">
 <div class="tx">Bishkek<br>2021-02-21 7:00 PM<br>(LT)</div>
 <div class="abs" style="left:7.5px;top:33.2px;width:73px;height:32.6px;box-sizing:border-box;border:0.8px solid #004680;background:#fff;">
  <div class="abs" style="left:0;top:0;width:100%;height:15.2px;background:#004680;"></div>
  <div class="abs" style="left:45.5px;top:15.2px;right:0;bottom:0;background:#ff7e00;border-left:0.8px solid #004680"></div>
  <div class="abs" style="left:0;top:2.2px;width:46px;text-align:center;font-size:7.6px;line-height:9px;font-weight:bold;color:#fff;">Pollutant</div>
  <div class="abs" style="left:46px;top:2.2px;width:26px;text-align:center;font-size:7.6px;line-height:9px;font-weight:bold;color:#fff;">AQI</div>
  <div class="abs" style="left:0;top:18px;width:46px;text-align:center;font-size:7.6px;line-height:9px;color:#333;">PM2.5</div>
  <div class="abs" style="left:46px;top:18px;width:26px;text-align:center;font-size:7.6px;line-height:9px;font-weight:bold;color:#fff;">113</div>
 </div>
</div>
<div id="tip" class="abs"></div>
</div>

<div class="abs ph" style="left:422px;top:1.5px;width:184.2px;height:19px;"><span class="abs" style="left:2.8px;top:4.2px;">Select a City</span></div>
<div class="abs sel" style="left:422px;top:22.3px;width:184.2px;height:19.2px;"><span class="abs" style="left:4.8px;top:3.4px;">Bishkek</span>
 <svg class="abs" style="left:161.6px;top:3.3px" width="18" height="8" viewBox="0 0 18 8"><path d="M2 1.8 L5.4 5.2 M5.4 1.8 L2 5.2" stroke="#888" stroke-width="0.85" fill="none"/><path d="M11.5 3 L15.5 3 L13.5 5.2 Z" fill="#8a8a8a"/></svg></div>
<div class="abs ph" style="left:422px;top:53.8px;width:184.2px;height:19.2px;"><span class="abs" style="left:2.8px;top:5.2px;">Select a Parameter</span></div>
<div class="abs sel" style="left:422px;top:74.8px;width:184.2px;height:19.2px;"><span class="abs" style="left:4.8px;top:3.2px;">PM2.5</span>
 <svg class="abs" style="left:161.6px;top:3.3px" width="18" height="8" viewBox="0 0 18 8"><path d="M2 1.8 L5.4 5.2 M5.4 1.8 L2 5.2" stroke="#888" stroke-width="0.85" fill="none"/><path d="M11.5 3 L15.5 3 L13.5 5.2 Z" fill="#8a8a8a"/></svg></div>
<div class="abs" style="left:421px;top:105.2px;width:186px;height:40.3px;box-sizing:border-box;background:#fff;border:1px solid #c8c8c8;">
 <span class="abs" style="left:5.5px;top:4.6px;font-size:8.3px;line-height:9px;font-weight:normal;-webkit-text-stroke:0.28px #333;color:#333;">Bishkek</span>
 <svg class="abs" style="left:159.4px;top:13.8px" width="19" height="19.3" viewBox="0 0 19 19"><rect width="19" height="19" fill="#f2b233"/><circle cx="4.6" cy="14.6" r="1.9" fill="#fff"/><path d="M2.8 8.2 A8 8 0 0 1 10.8 16.2" stroke="#fff" stroke-width="2.3" fill="none"/><path d="M2.8 3.6 A12.6 12.6 0 0 1 15.4 16.2" stroke="#fff" stroke-width="2.3" fill="none"/></svg>
</div>
<div class="abs" style="left:421px;top:151.2px;width:190px;font-size:6.15px;line-height:11.1px;color:#707070;white-space:nowrap;">Note: Values above 500 are considered Beyond the AQI. Follow<br>recommendations for the Hazardous category. Additional information<br>on reducing exposure to extremely high levels of particle pollution is<br>available <b style="color:#222;text-decoration:underline">here</b>.</div>

<div class="abs tab" style="left:16px;top:260px;width:59.5px;height:17px;background:#fff;border:1px solid #c4c4c4;border-top:2px solid #004680;border-bottom:none;color:#333;padding-top:3.9px;">AQI</div>
<div class="abs tab" style="left:77px;top:261px;width:91.7px;height:16px;background:#d2d2d2;color:#666;padding-top:4.2px;">Concentration</div>
<div class="abs tab" style="left:171.2px;top:261px;width:75.8px;height:16px;background:#d2d2d2;color:#666;padding-top:4.2px;">Historical</div>
<div class="abs" style="left:16px;top:277px;width:591px;height:1px;background:#bcbcbc;"></div>
<div class="abs" style="left:16px;top:284.3px;font-size:7.72px;line-height:9px;color:#333;white-space:nowrap;">Learn more about how the Air Quality Index [AQI] is calculated from the EPA <b style="text-decoration:underline;color:#222">here</b>.</div>

<div class="abs" style="left:16px;top:305px;width:443px;height:195px;background:#fff;"></div>
<svg class="abs" style="left:0;top:0" width="617" height="500" viewBox="0 0 617 500" font-family="Liberation Sans, sans-serif">
<line x1="57.7" x2="453.2" y1="338.95" y2="338.95" stroke="#e4e4e4" stroke-width="0.8"/>
<text x="49" y="341.05" text-anchor="end" font-size="5.9" fill="#222" stroke="#222" stroke-width="0.2">500</text>
<line x1="57.7" x2="453.2" y1="359.10" y2="359.10" stroke="#e4e4e4" stroke-width="0.8"/>
<text x="49" y="361.20" text-anchor="end" font-size="5.9" fill="#222" stroke="#222" stroke-width="0.2">400</text>
<line x1="57.7" x2="453.2" y1="379.25" y2="379.25" stroke="#e4e4e4" stroke-width="0.8"/>
<text x="49" y="381.35" text-anchor="end" font-size="5.9" fill="#222" stroke="#222" stroke-width="0.2">300</text>
<line x1="57.7" x2="453.2" y1="399.40" y2="399.40" stroke="#e4e4e4" stroke-width="0.8"/>
<text x="49" y="401.50" text-anchor="end" font-size="5.9" fill="#222" stroke="#222" stroke-width="0.2">200</text>
<line x1="57.7" x2="453.2" y1="419.55" y2="419.55" stroke="#e4e4e4" stroke-width="0.8"/>
<text x="49" y="421.65" text-anchor="end" font-size="5.9" fill="#222" stroke="#222" stroke-width="0.2">100</text>
<line x1="57.7" x2="453.2" y1="439.70" y2="439.70" stroke="#e4e4e4" stroke-width="0.8"/>
<text x="49" y="441.80" text-anchor="end" font-size="5.9" fill="#222" stroke="#222" stroke-width="0.2">0</text>
<line x1="57.7" x2="453.2" y1="439.70" y2="439.70" stroke="#ccd6eb" stroke-width="0.6"/>
<line x1="57.70" x2="57.70" y1="439.70" y2="444.70" stroke="#ccd6eb" stroke-width="0.6"/>
<line x1="74.18" x2="74.18" y1="439.70" y2="444.70" stroke="#ccd6eb" stroke-width="0.6"/>
<line x1="90.66" x2="90.66" y1="439.70" y2="444.70" stroke="#ccd6eb" stroke-width="0.6"/>
<line x1="107.14" x2="107.14" y1="439.70" y2="444.70" stroke="#ccd6eb" stroke-width="0.6"/>
<line x1="123.62" x2="123.62" y1="439.70" y2="444.70" stroke="#ccd6eb" stroke-width="0.6"/>
<line x1="140.10" x2="140.10" y1="439.70" y2="444.70" stroke="#ccd6eb" stroke-width="0.6"/>
<line x1="156.57" x2="156.57" y1="439.70" y2="444.70" stroke="#ccd6eb" stroke-width="0.6"/>
<line x1="173.05" x2="173.05" y1="439.70" y2="444.70" stroke="#ccd6eb" stroke-width="0.6"/>
<line x1="189.53" x2="189.53" y1="439.70" y2="444.70" stroke="#ccd6eb" stroke-width="0.6"/>
<line x1="206.01" x2="206.01" y1="439.70" y2="444.70" stroke="#ccd6eb" stroke-width="0.6"/>
<line x1="222.49" x2="222.49" y1="439.70" y2="444.70" stroke="#ccd6eb" stroke-width="0.6"/>
<line x1="238.97" x2="238.97" y1="439.70" y2="444.70" stroke="#ccd6eb" stroke-width="0.6"/>
<line x1="255.45" x2="255.45" y1="439.70" y2="444.70" stroke="#ccd6eb" stroke-width="0.6"/>
<line x1="271.93" x2="271.93" y1="439.70" y2="444.70" stroke="#ccd6eb" stroke-width="0.6"/>
<line x1="288.41" x2="288.41" y1="439.70" y2="444.70" stroke="#ccd6eb" stroke-width="0.6"/>
<line x1="304.89" x2="304.89" y1="439.70" y2="444.70" stroke="#ccd6eb" stroke-width="0.6"/>
<line x1="321.37" x2="321.37" y1="439.70" y2="444.70" stroke="#ccd6eb" stroke-width="0.6"/>
<line x1="337.85" x2="337.85" y1="439.70" y2="444.70" stroke="#ccd6eb" stroke-width="0.6"/>
<line x1="354.32" x2="354.32" y1="439.70" y2="444.70" stroke="#ccd6eb" stroke-width="0.6"/>
<line x1="370.80" x2="370.80" y1="439.70" y2="444.70" stroke="#ccd6eb" stroke-width="0.6"/>
<line x1="387.28" x2="387.28" y1="439.70" y2="444.70" stroke="#ccd6eb" stroke-width="0.6"/>
<line x1="403.76" x2="403.76" y1="439.70" y2="444.70" stroke="#ccd6eb" stroke-width="0.6"/>
<line x1="420.24" x2="420.24" y1="439.70" y2="444.70" stroke="#ccd6eb" stroke-width="0.6"/>
<line x1="436.72" x2="436.72" y1="439.70" y2="444.70" stroke="#ccd6eb" stroke-width="0.6"/>
<line x1="453.20" x2="453.20" y1="439.70" y2="444.70" stroke="#ccd6eb" stroke-width="0.6"/>
<rect x="61.64" y="424.18" width="8.6" height="15.52" fill="#ffff00" stroke="#55550a" stroke-width="0.95"/>
<text transform="translate(67.54,448.70) rotate(-45)" text-anchor="end" font-size="6.1" fill="#666">8 PM</text>
<rect x="78.12" y="422.17" width="8.6" height="17.53" fill="#ffff00" stroke="#55550a" stroke-width="0.95"/>
<text transform="translate(84.02,448.70) rotate(-45)" text-anchor="end" font-size="6.1" fill="#666">9 PM</text>
<rect x="94.60" y="421.16" width="8.6" height="18.54" fill="#ffff00" stroke="#55550a" stroke-width="0.95"/>
<text transform="translate(100.50,448.70) rotate(-45)" text-anchor="end" font-size="6.1" fill="#666">10 PM</text>
<rect x="111.08" y="420.15" width="8.6" height="19.55" fill="#ffff00" stroke="#55550a" stroke-width="0.95"/>
<text transform="translate(116.98,448.70) rotate(-45)" text-anchor="end" font-size="6.1" fill="#666">11 PM</text>
<rect x="127.56" y="408.87" width="8.6" height="30.83" fill="#ff0000" stroke="#5a0808" stroke-width="0.95"/>
<text transform="translate(133.46,448.70) rotate(-45)" text-anchor="end" font-size="6.1" fill="#666" letter-spacing="0.3">Feb 21, 2021 12 AM</text>
<rect x="144.04" y="413.91" width="8.6" height="25.79" fill="#ff7e00" stroke="#5e3208" stroke-width="0.95"/>
<text transform="translate(149.94,448.70) rotate(-45)" text-anchor="end" font-size="6.1" fill="#666">1 AM</text>
<rect x="160.51" y="422.17" width="8.6" height="17.53" fill="#ffff00" stroke="#55550a" stroke-width="0.95"/>
<text transform="translate(166.41,448.70) rotate(-45)" text-anchor="end" font-size="6.1" fill="#666">2 AM</text>
<rect x="176.99" y="423.38" width="8.6" height="16.32" fill="#ffff00" stroke="#55550a" stroke-width="0.95"/>
<text transform="translate(182.89,448.70) rotate(-45)" text-anchor="end" font-size="6.1" fill="#666">3 AM</text>
<rect x="193.47" y="426.20" width="8.6" height="13.50" fill="#ffff00" stroke="#55550a" stroke-width="0.95"/>
<text transform="translate(199.37,448.70) rotate(-45)" text-anchor="end" font-size="6.1" fill="#666">4 AM</text>
<rect x="209.95" y="426.20" width="8.6" height="13.50" fill="#ffff00" stroke="#55550a" stroke-width="0.95"/>
<text transform="translate(215.85,448.70) rotate(-45)" text-anchor="end" font-size="6.1" fill="#666">5 AM</text>
<rect x="226.43" y="427.21" width="8.6" height="12.49" fill="#ffff00" stroke="#55550a" stroke-width="0.95"/>
<text transform="translate(232.33,448.70) rotate(-45)" text-anchor="end" font-size="6.1" fill="#666">6 AM</text>
<rect x="242.91" y="427.21" width="8.6" height="12.49" fill="#ffff00" stroke="#55550a" stroke-width="0.95"/>
<text transform="translate(248.81,448.70) rotate(-45)" text-anchor="end" font-size="6.1" fill="#666">7 AM</text>
<rect x="259.39" y="420.36" width="8.6" height="19.34" fill="#ffff00" stroke="#55550a" stroke-width="0.95"/>
<text transform="translate(265.29,448.70) rotate(-45)" text-anchor="end" font-size="6.1" fill="#666">8 AM</text>
<rect x="275.87" y="423.38" width="8.6" height="16.32" fill="#ffff00" stroke="#55550a" stroke-width="0.95"/>
<text transform="translate(281.77,448.70) rotate(-45)" text-anchor="end" font-size="6.1" fill="#666">9 AM</text>
<rect x="292.35" y="426.20" width="8.6" height="13.50" fill="#ffff00" stroke="#55550a" stroke-width="0.95"/>
<text transform="translate(298.25,448.70) rotate(-45)" text-anchor="end" font-size="6.1" fill="#666">10 AM</text>
<rect x="308.83" y="426.20" width="8.6" height="13.50" fill="#ffff00" stroke="#55550a" stroke-width="0.95"/>
<text transform="translate(314.73,448.70) rotate(-45)" text-anchor="end" font-size="6.1" fill="#666">11 AM</text>
<rect x="325.31" y="417.13" width="8.6" height="22.57" fill="#ff7e00" stroke="#5e3208" stroke-width="0.95"/>
<text transform="translate(331.21,448.70) rotate(-45)" text-anchor="end" font-size="6.1" fill="#666">12 PM</text>
<rect x="341.79" y="416.12" width="8.6" height="23.58" fill="#ff7e00" stroke="#5e3208" stroke-width="0.95"/>
<text transform="translate(347.69,448.70) rotate(-45)" text-anchor="end" font-size="6.1" fill="#666">1 PM</text>
<rect x="358.26" y="416.53" width="8.6" height="23.17" fill="#ff7e00" stroke="#5e3208" stroke-width="0.95"/>
<text transform="translate(364.16,448.70) rotate(-45)" text-anchor="end" font-size="6.1" fill="#666">2 PM</text>
<rect x="374.74" y="419.55" width="8.6" height="20.15" fill="#ffff00" stroke="#55550a" stroke-width="0.95"/>
<text transform="translate(380.64,448.70) rotate(-45)" text-anchor="end" font-size="6.1" fill="#666">3 PM</text>
<rect x="391.22" y="420.36" width="8.6" height="19.34" fill="#ffff00" stroke="#55550a" stroke-width="0.95"/>
<text transform="translate(397.12,448.70) rotate(-45)" text-anchor="end" font-size="6.1" fill="#666">4 PM</text>
<rect x="407.70" y="425.19" width="8.6" height="14.51" fill="#ffff00" stroke="#55550a" stroke-width="0.95"/>
<text transform="translate(413.60,448.70) rotate(-45)" text-anchor="end" font-size="6.1" fill="#666">5 PM</text>
<rect x="424.18" y="419.35" width="8.6" height="20.35" fill="#ff7e00" stroke="#5e3208" stroke-width="0.95"/>
<text transform="translate(430.08,448.70) rotate(-45)" text-anchor="end" font-size="6.1" fill="#666">6 PM</text>
<rect x="440.66" y="416.93" width="8.6" height="22.77" fill="#ff7e00" stroke="#5e3208" stroke-width="0.95"/>
<text transform="translate(446.56,448.70) rotate(-45)" text-anchor="end" font-size="6.1" fill="#666">7 PM</text>
<text transform="translate(33,387) rotate(-90)" text-anchor="middle" font-size="6.3" fill="#333">AQI</text>
<text x="237.3" y="318.7" text-anchor="middle" font-size="10.4" fill="#3c3c3c" letter-spacing="0.02">Bishkek – PM2.5</text>
</svg>

<div class="abs" style="left:467.6px;top:305px;width:139.9px;height:189.5px;box-sizing:border-box;background:#ececec;border:1px solid #004680;">
 <div class="abs" style="left:0;top:0;width:100%;height:41.3px;background:#004680;color:#fff;text-align:center;font-weight:bold;">
  <div class="abs" style="left:0;width:100%;top:3.0px;font-size:8.3px;line-height:10px;">Current Conditions</div>
  <div class="abs" style="left:0;width:100%;top:15.3px;font-size:6.7px;line-height:9px;">observed at</div>
  <div class="abs" style="left:0;width:100%;top:26.6px;font-size:8.25px;line-height:10px;">Feb 21, 2021 7:00 PM (LT)</div>
 </div>
 <div class="abs" style="left:0;top:41.3px;width:100%;height:78.9px;background:#ff7e00;color:#fff;text-align:center;font-weight:bold;font-size:11.05px;line-height:15.55px;">
  <div class="abs" style="left:-5px;right:-5px;top:9px;">113 AQI<br>Unhealthy for Sensitive<br>Groups<br>PM2.5</div>
 </div>
 <div class="abs" style="left:0;width:100%;top:124.9px;text-align:center;font-size:6.67px;line-height:9px;font-weight:bold;color:#222;">Health Message</div>
 <div class="abs" style="left:3.2px;top:137.1px;font-size:6.67px;line-height:11.55px;color:#444;white-space:nowrap;">When AQI values are between 101 and 150,<br>members of sensitive groups may<br>experience health effects, but the general<br>public is unlikely to be affected.</div>
</div>
<div class="abs" style="left:467.5px;top:494.5px;height:5.5px;overflow:hidden;font-size:6.15px;line-height:9px;color:#666;white-space:nowrap;">Note: Values above 500 are considered Beyond the</div>
</body></html>
